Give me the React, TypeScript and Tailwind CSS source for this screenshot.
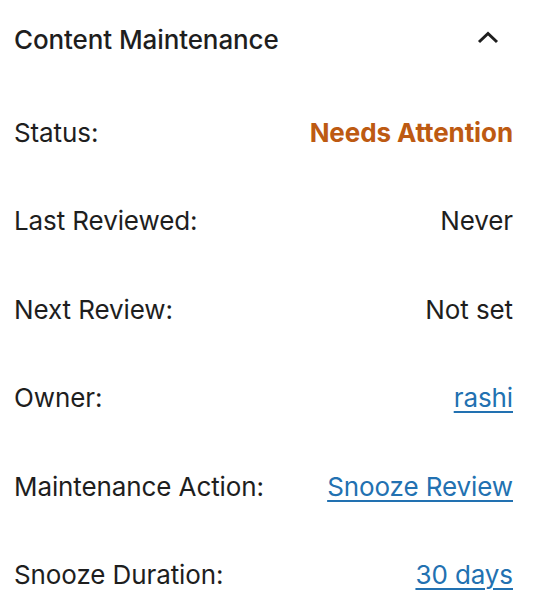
export default function App() {
  const rows: { label: string; value: string; kind: "orange" | "plain" | "link" }[] = [
    { label: "Status:", value: "Needs Attention", kind: "orange" },
    { label: "Last Reviewed:", value: "Never", kind: "plain" },
    { label: "Next Review:", value: "Not set", kind: "plain" },
    { label: "Owner:", value: "rashi", kind: "link" },
    { label: "Maintenance Action:", value: "Snooze Review", kind: "link" },
    { label: "Snooze Duration:", value: "30 days", kind: "link" },
  ];
  return (
    <div
      className="w-[533px] h-[611px] bg-white text-[#1e1e1e] overflow-hidden"
      style={{ fontFamily: "Inter, 'Noto Sans', sans-serif" }}
    >
      <div className="flex items-center justify-between pl-[14px] pr-[34px] h-[79px]">
        <span className="text-[26px] font-medium tracking-[-0.1px]">Content Maintenance</span>
        <svg width="22" height="22" viewBox="0 0 22 22" className="mt-[-4px]">
          <path d="M2 15 L11 6.5 L20 15" fill="none" stroke="#1e1e1e" strokeWidth="3" />
        </svg>
      </div>
      <div className="flex flex-col pl-[14px] pr-[20px] pt-[38px] gap-[58.5px]">
        {rows.map((r) => (
          <div key={r.label} className="flex items-center justify-between h-[30px] text-[26px] tracking-[-0.1px]">
            <span>{r.label}</span>
            {r.kind === "orange" && (
              <span className="font-bold text-[#bd5a12]">{r.value}</span>
            )}
            {r.kind === "plain" && <span>{r.value}</span>}
            {r.kind === "link" && (
              <a href="#" className="text-[#2271b1] underline underline-offset-[4px] decoration-[2px]">
                {r.value}
              </a>
            )}
          </div>
        ))}
      </div>
    </div>
  );
}
